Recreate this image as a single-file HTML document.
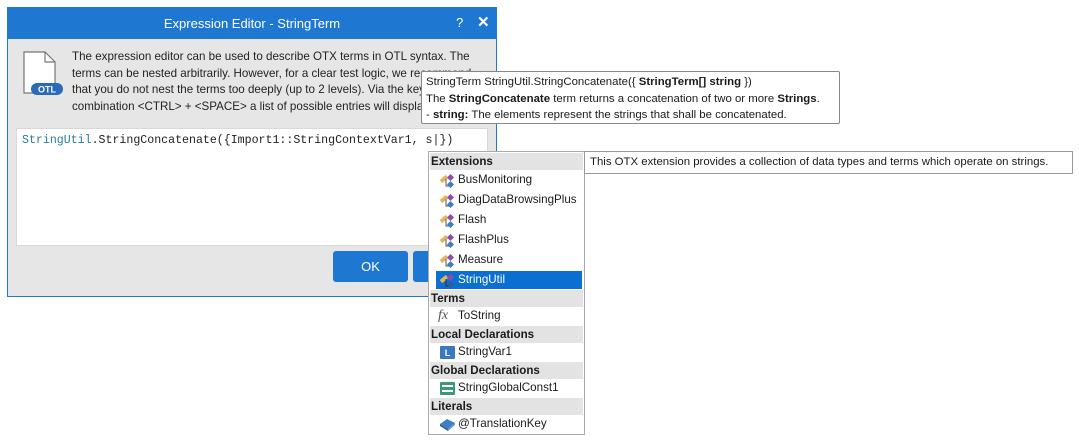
<!DOCTYPE html>
<html><head><style>
*{margin:0;padding:0;box-sizing:border-box}
body{width:1079px;height:445px;background:#fff;position:relative;overflow:hidden;font-family:"Liberation Sans",sans-serif;font-size:11.6px;color:#1a1a1a}
.abs{position:absolute}
.dlg{left:7px;top:7px;width:490px;height:290px;background:#e6e6e6;border:1px solid #1e78d2}
.title{left:0;top:0;width:488px;height:31px;background:#1e78d2;color:#fff;font-size:13px;line-height:31px;text-align:center}
.desc{left:64px;top:41px;width:410px;line-height:16.5px;font-size:11.6px;color:#222}
.editor{left:8px;top:120px;width:472px;height:118px;background:#fff;border:1px solid #d8d8d8}
.code{left:5px;top:5px;font-family:"Liberation Mono",monospace;font-size:11.6px;color:#222;white-space:pre}
.btn{top:243px;height:31px;background:#1e78d2;border-radius:3px;color:#fff;font-size:13px;line-height:31px;text-align:center}
.tip{background:#fff;border:1px solid #888;border-radius:2px;font-size:11.4px;white-space:nowrap}
.list{left:428px;top:151px;width:157px;height:284px;background:#fff;border:1px solid #aaa}
.hdr{position:absolute;left:1px;width:153px;height:17px;background:#e3e3e3;font-weight:bold;line-height:17px;padding-left:1px;font-size:11.6px}
.it{position:absolute;left:7px;width:146px;height:18px;line-height:18px;padding-left:22px;font-size:11.6px}
.ico{position:absolute;left:3px;top:2px;width:16px;height:15px}
</style></head><body>
<div class="abs dlg">
 <div class="abs title">Expression Editor - StringTerm</div>
 <div class="abs" style="left:448px;top:7px;color:#fff;font-size:13px">?</div>
 <div class="abs" style="left:469px;top:5px;color:#fff;font-size:15px;font-weight:bold">✕</div>
 <svg class="abs" style="left:14px;top:40px" width="50" height="50">
  <path d="M2 4 H23 L33 14 V45 H2 Z" fill="#fff" stroke="#777" stroke-width="1.2"/>
  <path d="M23 4 V14 H33" fill="none" stroke="#777" stroke-width="1.2"/>
  <rect x="9" y="35" width="32" height="12" rx="6" fill="#2a6ab8"/>
  <text x="25" y="44.5" font-size="9" font-weight="bold" fill="#fff" text-anchor="middle" font-family="Liberation Sans">OTL</text>
 </svg>
 <div class="abs desc">The expression editor can be used to describe OTX terms in OTL syntax. The terms can be nested arbitrarily. However, for a clear test logic, we recommend that you do not nest the terms too deeply (up to 2 levels). Via the key combination &lt;CTRL&gt; + &lt;SPACE&gt; a list of possible entries will display.</div>
 <div class="abs editor"><div class="abs code"><span style="color:#2b7a9c">StringUtil</span>.StringConcatenate({Import1::StringContextVar1, s|})</div></div>
 <div class="abs btn" style="left:325px;width:75px">OK</div>
 <div class="abs btn" style="left:405px;width:75px">Cancel</div>
</div>
<div class="abs tip" style="left:421px;top:71px;width:419px;height:53px;padding:2px 4px;line-height:16.5px">StringTerm StringUtil.StringConcatenate({ <b>StringTerm[] string</b> })<br>The <b>StringConcatenate</b> term returns a concatenation of two or more <b>Strings</b>.<br>- <b>string:</b> The elements represent the strings that shall be concatenated.</div>
<div class="abs list">
 <div class="hdr" style="top:1px">Extensions</div>
 <div class="it" style="top:19px"><svg class="ico"><rect x="1" y="4" width="8" height="4" fill="#e6b35a" transform="rotate(-40 5 6)"/><path d="M7 6 V13 H13" fill="none" stroke="#555"/><rect x="9" y="2" width="5" height="5" fill="#8c4db0" transform="rotate(45 11.5 4.5)"/><rect x="9" y="9" width="5" height="5" fill="#3d7fc2" transform="rotate(45 11.5 11.5)"/></svg>BusMonitoring</div>
 <div class="it" style="top:39px"><svg class="ico"><rect x="1" y="4" width="8" height="4" fill="#e6b35a" transform="rotate(-40 5 6)"/><path d="M7 6 V13 H13" fill="none" stroke="#555"/><rect x="9" y="2" width="5" height="5" fill="#8c4db0" transform="rotate(45 11.5 4.5)"/><rect x="9" y="9" width="5" height="5" fill="#3d7fc2" transform="rotate(45 11.5 11.5)"/></svg>DiagDataBrowsingPlus</div>
 <div class="it" style="top:59px"><svg class="ico"><rect x="1" y="4" width="8" height="4" fill="#e6b35a" transform="rotate(-40 5 6)"/><path d="M7 6 V13 H13" fill="none" stroke="#555"/><rect x="9" y="2" width="5" height="5" fill="#8c4db0" transform="rotate(45 11.5 4.5)"/><rect x="9" y="9" width="5" height="5" fill="#3d7fc2" transform="rotate(45 11.5 11.5)"/></svg>Flash</div>
 <div class="it" style="top:79px"><svg class="ico"><rect x="1" y="4" width="8" height="4" fill="#e6b35a" transform="rotate(-40 5 6)"/><path d="M7 6 V13 H13" fill="none" stroke="#555"/><rect x="9" y="2" width="5" height="5" fill="#8c4db0" transform="rotate(45 11.5 4.5)"/><rect x="9" y="9" width="5" height="5" fill="#3d7fc2" transform="rotate(45 11.5 11.5)"/></svg>FlashPlus</div>
 <div class="it" style="top:99px"><svg class="ico"><rect x="1" y="4" width="8" height="4" fill="#e6b35a" transform="rotate(-40 5 6)"/><path d="M7 6 V13 H13" fill="none" stroke="#555"/><rect x="9" y="2" width="5" height="5" fill="#8c4db0" transform="rotate(45 11.5 4.5)"/><rect x="9" y="9" width="5" height="5" fill="#3d7fc2" transform="rotate(45 11.5 11.5)"/></svg>Measure</div>
 <div class="it" style="top:119px;background:#0a6fd0;color:#fff"><svg class="ico"><rect x="1" y="4" width="8" height="4" fill="#e6b35a" transform="rotate(-40 5 6)"/><path d="M7 6 V13 H13" fill="none" stroke="#333"/><rect x="9" y="2" width="5" height="5" fill="#8c4db0" transform="rotate(45 11.5 4.5)"/><rect x="9" y="9" width="5" height="5" fill="#2c5f9a" transform="rotate(45 11.5 11.5)"/></svg>StringUtil</div>
 <div class="hdr" style="top:138px">Terms</div>
 <div class="it" style="top:155px"><span class="abs" style="left:2px;top:0;font-family:'Liberation Serif',serif;font-style:italic;font-size:14px;color:#555">fx</span>ToString</div>
 <div class="hdr" style="top:174px">Local Declarations</div>
 <div class="it" style="top:191px"><svg class="ico"><rect x="1" y="1" width="15" height="13" rx="1" fill="#3a78c0"/><text x="8.5" y="11" font-size="9" font-weight="bold" fill="#fff" text-anchor="middle" font-family="Liberation Sans">L</text></svg>StringVar1</div>
 <div class="hdr" style="top:210px">Global Declarations</div>
 <div class="it" style="top:227px"><svg class="ico"><rect x="1" y="1" width="15" height="13" rx="1" fill="#3a9a78"/><rect x="3" y="4" width="11" height="2" fill="#fff"/><rect x="3" y="9" width="11" height="2" fill="#fff"/></svg>StringGlobalConst1</div>
 <div class="hdr" style="top:246px">Literals</div>
 <div class="it" style="top:263px"><svg class="ico"><path d="M1 7 L8 2 L16 6 L9 12 Z" fill="#3d7fc2"/><path d="M1 7 L9 12 L9 14 L1 9 Z" fill="#2a5c95"/><path d="M9 12 L16 6 L16 8 L9 14Z" fill="#5a9ad6"/></svg>@TranslationKey</div>
</div>
<div class="abs tip" style="left:584px;top:151px;width:489px;height:23px;padding:2px 5px;line-height:17px;border-color:#999;border-radius:0">This OTX extension provides a collection of data types and terms which operate on strings.</div>
</body></html>
